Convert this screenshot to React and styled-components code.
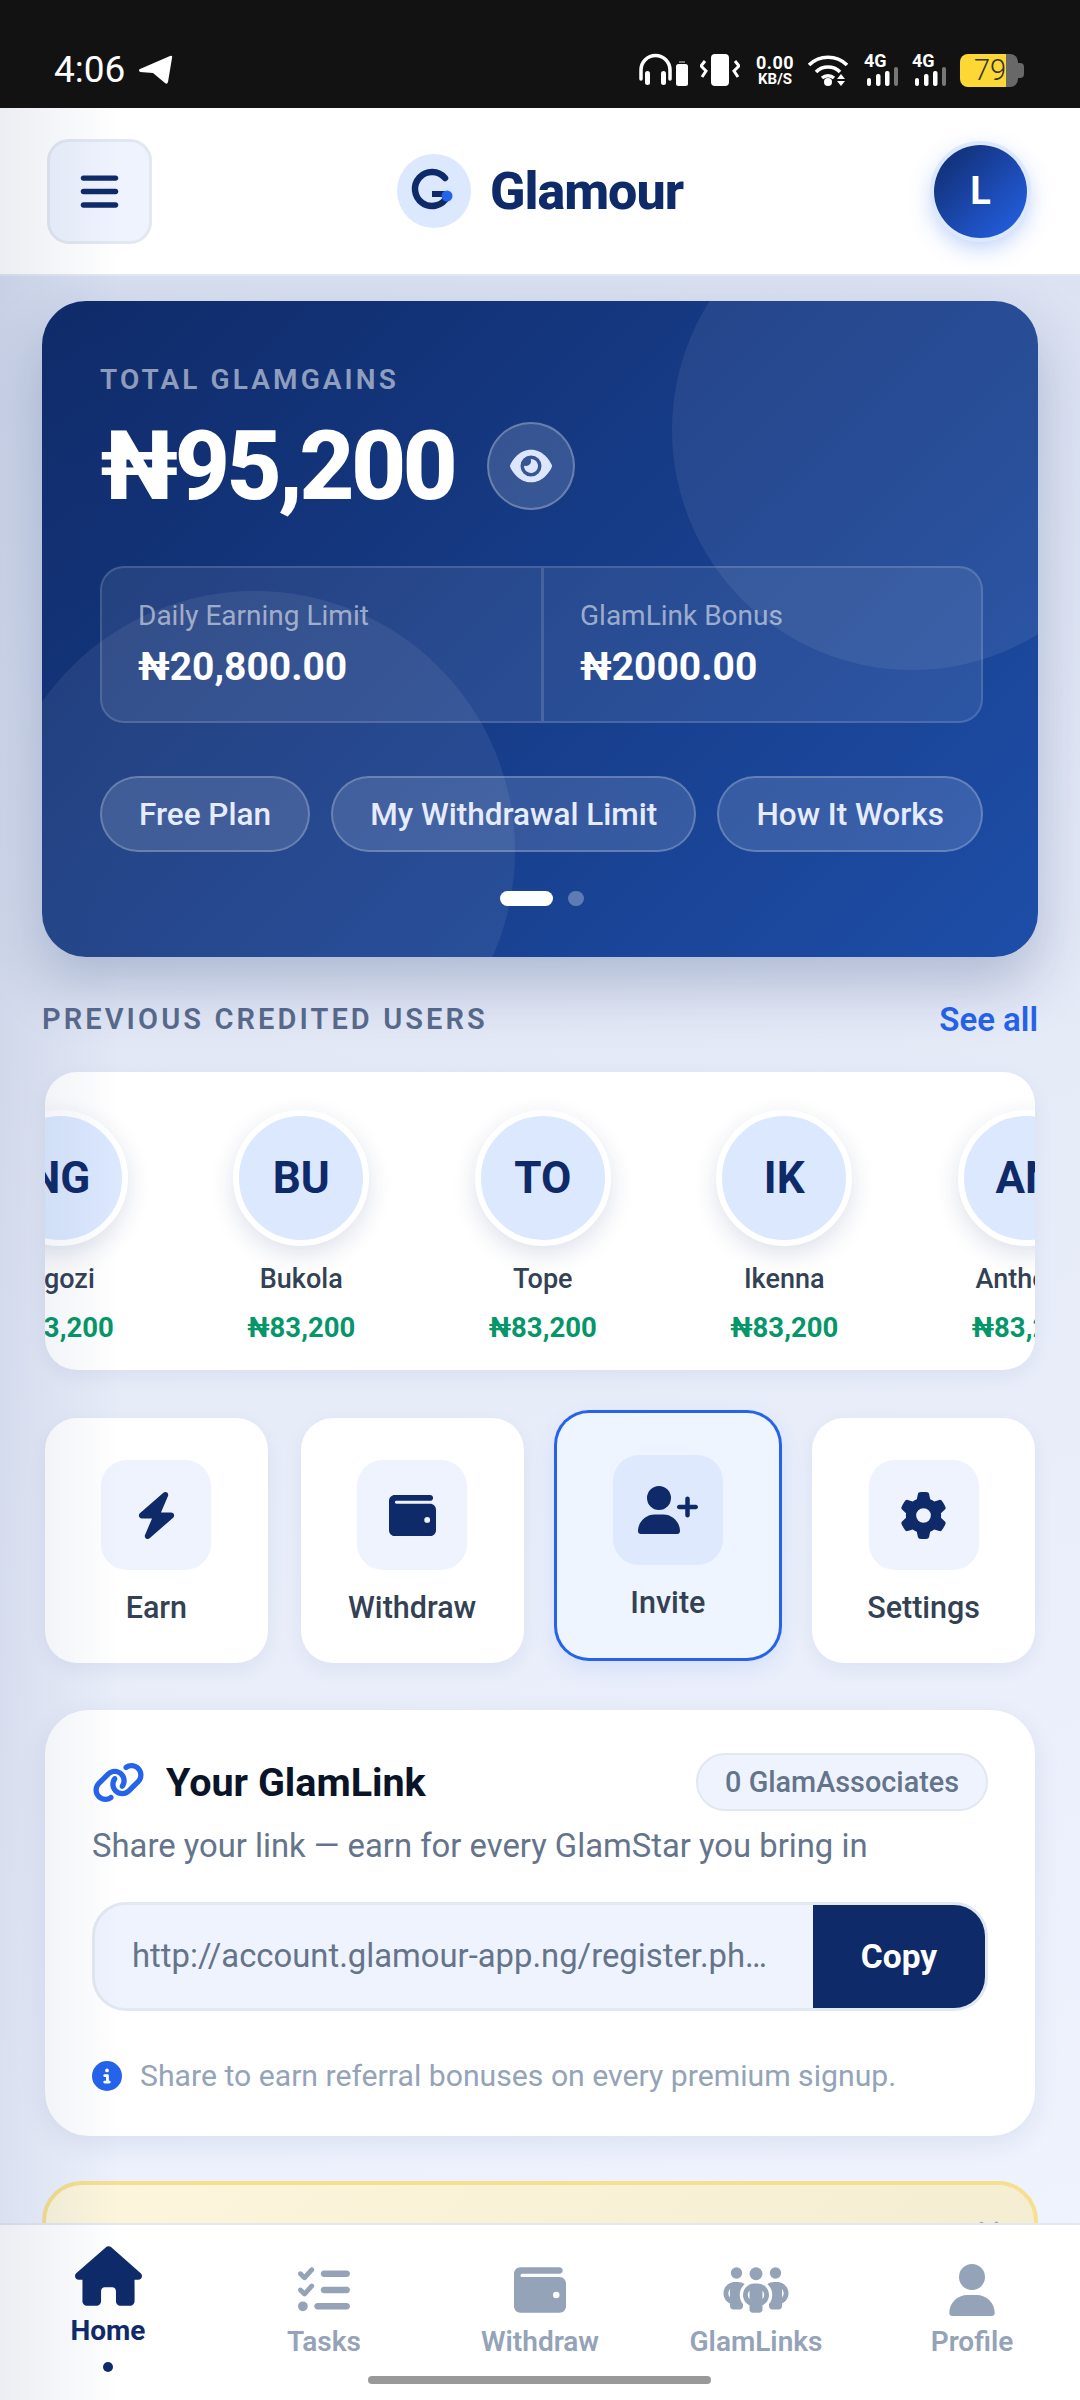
import React from 'react';
import styled, { createGlobalStyle } from 'styled-components';
import {
  FaBars,
  FaBolt,
  FaCircleInfo,
  FaEye,
  FaGear,
  FaHouse,
  FaLink,
  FaListCheck,
  FaPeopleGroup,
  FaUser,
  FaUserPlus,
  FaWallet,
  FaXmark
} from 'react-icons/fa6';

const Global = createGlobalStyle`
  html, body {
    margin: 0;
    padding: 0;
    background: #eff3fe;
  }
  * {
    box-sizing: border-box;
  }
  body {
    font-family: Roboto, "Liberation Sans", sans-serif;
  }
`;

const Phone = styled.div`
  position: relative;
  display: flex;
  flex-direction: column;
  width: 1080px;
  height: 2400px;
  overflow: hidden;

  &::after {
    content: '';
    position: absolute;
    left: 0;
    top: 108px;
    bottom: 0;
    width: 120px;
    background: linear-gradient(90deg, rgba(30, 58, 120, 0.09), rgba(30, 58, 120, 0));
    pointer-events: none;
  }
`;

/* status bar */
const StatusBar = styled.div`
  flex: none;
  display: flex;
  align-items: center;
  justify-content: space-between;
  height: 108px;
  padding: 32px 62px 0 54px;
  background: #121212;
  color: #fff;
`;

const Clock = styled.div`
  display: flex;
  align-items: center;
  gap: 13px;
  font-size: 37px;
  font-weight: 400;
  line-height: 40px;
`;

const StatusIcons = styled.div`
  display: flex;
  align-items: center;
`;

const NetSpeed = styled.div`
  display: flex;
  flex-direction: column;
  align-items: center;
  width: 40px;
  margin: 0 13px 0 15px;
  font-weight: 700;
  span:first-child {
    font-size: 18px;
    line-height: 17px;
    letter-spacing: 0.5px;
  }
  span:last-child {
    font-size: 15px;
    line-height: 16px;
  }
`;

const Signal = styled.div`
  position: relative;
  width: 34px;
  height: 32px;
  margin-left: ${p => p.$gap}px;

  span {
    position: absolute;
    left: 0;
    top: -2px;
    font-size: 18px;
    font-weight: 700;
    line-height: 18px;
  }
  svg {
    position: absolute;
    left: 3px;
    bottom: 0;
  }
`;

const Battery = styled.div`
  position: relative;
  width: 58px;
  height: 33px;
  margin-left: 14px;
  padding-left: 14px;
  border-radius: 8px;
  background: linear-gradient(90deg, #fdd835 46px, #686868 46px);
  color: #333;
  font-size: 29px;
  font-weight: 300;
  line-height: 33px;

  &::after {
    content: '';
    position: absolute;
    right: -6px;
    top: 9px;
    width: 6px;
    height: 15px;
    border-radius: 0 4px 4px 0;
    background: #686868;
  }
`;

/* header */
const Header = styled.header`
  flex: none;
  display: flex;
  align-items: center;
  justify-content: space-between;
  height: 168px;
  padding: 0 53px 0 47px;
  background: #fff;
  border-bottom: 2px solid #e2e8f0;
`;

const MenuButton = styled.button`
  display: flex;
  align-items: center;
  justify-content: center;
  width: 105px;
  height: 105px;
  padding: 0;
  border: 3px solid #e2e8f0;
  border-radius: 22px;
  background: #eff3fe;
  color: #0f2a68;
  font-size: 43px;
`;

const Brand = styled.div`
  display: flex;
  align-items: center;
  gap: 19px;
  margin-right: 6px;
  color: #0f2a68;
  font-size: 52px;
  font-weight: 800;
  letter-spacing: -1px;
`;

const UserBadge = styled.div`
  display: flex;
  align-items: center;
  justify-content: center;
  width: 93px;
  height: 93px;
  border-radius: 50%;
  background: linear-gradient(135deg, #0f2a68, #2563eb);
  box-shadow: 0 0 0 4px #dbe8fe, 0 8px 24px rgba(37, 99, 235, 0.35);
  color: #fff;
  font-size: 38px;
  font-weight: 700;
`;

/* main */
const Main = styled.main`
  flex: 1;
  min-height: 0;
  overflow: hidden;
  padding: 25px 42px 0;
  background: linear-gradient(165deg, #d8dff0 0%, #e6ebf8 48%, #eff3fe 100%);
`;

const Hero = styled.section`
  position: relative;
  height: 656px;
  padding: 61px 55px 0 58px;
  border-radius: 44px;
  overflow: hidden;
  background: linear-gradient(135deg, #0f2a68 0%, #1e4ea8 100%);
  box-shadow: 0 28px 60px rgba(15, 42, 104, 0.25);
  color: #fff;
`;

const Bubble = styled.div`
  position: absolute;
  left: ${p => p.$left}px;
  top: ${p => p.$top}px;
  width: ${p => p.$size}px;
  height: ${p => p.$size}px;
  border-radius: 50%;
  background: rgba(255, 255, 255, ${p => p.$alpha});
`;

const HeroBody = styled.div`
  position: relative;
`;

const HeroLabel = styled.div`
  color: rgba(255, 255, 255, 0.55);
  font-size: 28px;
  font-weight: 600;
  line-height: 36px;
  letter-spacing: 3.1px;
`;

const AmountRow = styled.div`
  display: flex;
  align-items: center;
  gap: 33px;
  height: 88px;
  margin-top: 24px;
`;

const Amount = styled.div`
  font-size: 96px;
  font-weight: 800;
  line-height: 88px;
  letter-spacing: -3.7px;
`;

const EyeButton = styled.div`
  display: flex;
  align-items: center;
  justify-content: center;
  width: 88px;
  height: 88px;
  border: 2px solid rgba(255, 255, 255, 0.25);
  border-radius: 50%;
  background: rgba(255, 255, 255, 0.15);
  color: #dce6ff;
  font-size: 42px;
`;

const Stats = styled.div`
  display: grid;
  grid-template-columns: 439px 1fr;
  height: 157px;
  margin-top: 56px;
  border: 2px solid rgba(255, 255, 255, 0.14);
  border-radius: 24px;
  background: rgba(255, 255, 255, 0.08);
`;

const Stat = styled.div`
  padding: 30px 36px 0;
  & + & {
    border-left: 3px solid rgba(255, 255, 255, 0.14);
    padding-left: 36px;
  }
`;

const StatLabel = styled.div`
  color: rgba(255, 255, 255, 0.55);
  font-size: 28px;
  line-height: 36px;
`;

const StatValue = styled.div`
  margin-top: 10px;
  font-size: 39px;
  font-weight: 700;
  line-height: 46px;
`;

const Pills = styled.div`
  display: flex;
  justify-content: space-between;
  margin-top: 53px;
`;

const Pill = styled.div`
  display: flex;
  align-items: center;
  height: 76px;
  padding: 0 37px;
  border: 2px solid rgba(255, 255, 255, 0.22);
  border-radius: 38px;
  background: rgba(255, 255, 255, 0.13);
  color: #e6ecff;
  font-size: 31.5px;
  font-weight: 500;
`;

const Dots = styled.div`
  display: flex;
  justify-content: center;
  gap: 15px;
  margin-top: 39px;
`;

const Dot = styled.div`
  width: ${p => (p.$active ? 53 : 16)}px;
  height: 15px;
  border-radius: 8px;
  background: ${p => (p.$active ? '#fff' : 'rgba(255, 255, 255, 0.3)')};
`;

const SectionHead = styled.div`
  display: flex;
  align-items: center;
  justify-content: space-between;
  height: 40px;
  margin-top: 42px;
`;

const SectionTitle = styled.div`
  color: #5a6b8c;
  font-size: 29px;
  font-weight: 600;
  letter-spacing: 3.1px;
`;

const SeeAll = styled.div`
  color: #2563eb;
  font-size: 33px;
  font-weight: 600;
`;

const UsersCard = styled.div`
  height: 298px;
  margin: 33px 3px 0;
  padding-top: 38px;
  border-radius: 32px;
  background: #fff;
  overflow: hidden;
  box-shadow: 0 6px 20px rgba(15, 42, 104, 0.06);
`;

const UsersTrack = styled.div`
  display: flex;
  margin-left: -106px;
`;

const UserItem = styled.div`
  flex: none;
  display: flex;
  flex-direction: column;
  align-items: center;
  width: 241.5px;
`;

const Initials = styled.div`
  display: flex;
  align-items: center;
  justify-content: center;
  width: 136px;
  height: 136px;
  border: 6px solid #fff;
  border-radius: 50%;
  background: #dbe8fe;
  box-shadow: 0 8px 24px rgba(15, 42, 104, 0.14);
  color: #0f2a68;
  font-size: 44px;
  font-weight: 700;
`;

const UserName = styled.div`
  margin-top: 15px;
  color: #334155;
  font-size: 27px;
  font-weight: 500;
  line-height: 36px;
`;

const UserGain = styled.div`
  margin-top: 13px;
  color: #059669;
  font-size: 27.5px;
  font-weight: 700;
  line-height: 36px;
`;

const Tiles = styled.div`
  display: grid;
  grid-template-columns: repeat(4, 1fr);
  gap: 33px;
  margin: 48px 3px 0;
`;

const Tile = styled.div`
  display: flex;
  flex-direction: column;
  align-items: center;
  height: 245px;
  padding-top: 42px;
  border-radius: 32px;
  background: ${p => (p.$active ? '#eff5ff' : '#fff')};
  box-shadow: ${p =>
    p.$active
      ? '0 0 0 3px #2563eb, 0 8px 24px rgba(37, 99, 235, 0.12)'
      : '0 6px 20px rgba(15, 42, 104, 0.06)'};
  transform: ${p => (p.$active ? 'translateY(-5px)' : 'none')};
`;

const TileIcon = styled.div`
  display: flex;
  align-items: center;
  justify-content: center;
  width: 110px;
  height: 110px;
  border-radius: 26px;
  background: ${p => (p.$active ? '#dfe9fd' : '#eff3fe')};
  color: #0f2a68;

  svg {
    flex: none;
    width: ${p => p.$w}px;
    height: ${p => p.$h}px;
  }
`;

const TileLabel = styled.div`
  margin-top: 18px;
  color: #334155;
  font-size: 30.5px;
  font-weight: 500;
  line-height: 40px;
`;

const LinkCard = styled.section`
  height: 426px;
  margin: 47px 3px 0;
  padding: 43px 47px 0;
  border-radius: 44px;
  background: #fff;
  box-shadow: 0 8px 28px rgba(15, 42, 104, 0.08);
`;

const LinkTop = styled.div`
  display: flex;
  align-items: center;
  justify-content: space-between;
  height: 58px;
`;

const LinkTitle = styled.div`
  display: flex;
  align-items: center;
  gap: 21px;
  color: #0a1428;
  font-size: 39.5px;
  font-weight: 700;

  svg {
    flex: none;
    color: #2563eb;
    width: 53px;
    height: 53px;
  }
`;

const AssocBadge = styled.div`
  display: flex;
  align-items: center;
  height: 58px;
  padding: 0 27px;
  border: 2px solid #e2e8f0;
  border-radius: 29px;
  background: #eff3fe;
  color: #64748b;
  font-size: 28.8px;
  font-weight: 500;
`;

const LinkSub = styled.div`
  margin-top: 15px;
  color: #64748b;
  font-size: 32.8px;
  line-height: 40px;
`;

const LinkBox = styled.div`
  display: flex;
  height: 109px;
  margin-top: 36px;
  border: 3px solid #e2e8f0;
  border-radius: 34px;
  background: #eff3fe;
  overflow: hidden;
`;

const LinkText = styled.div`
  flex: 1;
  min-width: 0;
  padding: 0 40px 0 37px;
  color: #64748b;
  font-size: 32.8px;
  line-height: 103px;
  white-space: nowrap;
  overflow: hidden;
  text-overflow: ellipsis;
`;

const CopyButton = styled.div`
  flex: none;
  display: flex;
  align-items: center;
  justify-content: center;
  width: 172px;
  background: #0f2a68;
  color: #fff;
  font-size: 33.5px;
  font-weight: 700;
`;

const InfoRow = styled.div`
  display: flex;
  align-items: center;
  gap: 18px;
  margin-top: 47px;
  color: #94a3b8;
  font-size: 30.2px;
  line-height: 36px;

  svg {
    color: #2563eb;
    font-size: 30px;
  }
`;

const Notice = styled.section`
  position: relative;
  height: 220px;
  margin-top: 45px;
  border: 4px solid #f6e08e;
  border-radius: 40px;
  background: linear-gradient(135deg, #fdf6dc, #f3ecd0);
`;

const NoticeClose = styled.div`
  position: absolute;
  right: 30px;
  top: 31px;
  color: #94a3b8;
  font-size: 30px;
  line-height: 30px;
`;

/* bottom nav */
const Nav = styled.nav`
  position: relative;
  flex: none;
  display: grid;
  grid-template-columns: repeat(5, 1fr);
  height: 177px;
  background: #fff;
  border-top: 2px solid #e2e8f0;
`;

const NavItem = styled.div`
  display: flex;
  flex-direction: column;
  align-items: center;
  padding-top: ${p => (p.$active ? 21 : 39)}px;
  color: ${p => (p.$active ? '#0f2a68' : '#94a3b8')};
  font-size: 28px;
  font-weight: ${p => (p.$active ? 700 : 600)};

  svg {
    flex: none;
    display: block;
    width: ${p => p.$w}px;
    height: ${p => p.$h}px;
  }
`;

const NavLabel = styled.div`
  margin-top: ${p => (p.$active ? 7 : 8)}px;
  line-height: 36px;
`;

const NavDot = styled.div`
  width: 10px;
  height: 10px;
  margin-top: 13px;
  border-radius: 50%;
  background: #0f2a68;
`;

const HomeBar = styled.div`
  position: absolute;
  left: 368px;
  top: 151px;
  width: 343px;
  height: 8px;
  border-radius: 4px;
  background: #999;
`;

const ArrowIcon = () => (
  <svg width="35" height="30" viewBox="0 0 35 30" fill="#fff">
    <path d="M32 1Q35 0 34 3L30 27Q29 30 27 28L15 18L2 17Q0 15 2 14Z" />
  </svg>
);

const HeadphonesIcon = () => (
  <svg width="50" height="34" viewBox="0 0 50 34" fill="#fff">
    <path d="M3 26V17A14.5 14.5 0 0 1 32 17V26" fill="none" stroke="#fff" strokeWidth="3.5" strokeLinecap="round" />
    <rect x="7" y="18" width="5" height="14" rx="2.5" />
    <rect x="23" y="18" width="5" height="14" rx="2.5" />
    <rect x="38" y="11" width="12" height="22" rx="2.5" />
    <rect x="41" y="8" width="6" height="2" fill="#777" />
  </svg>
);

const VibrateIcon = () => (
  <svg width="40" height="32" viewBox="0 0 40 32" fill="#fff" style={{ marginLeft: 12 }}>
    <rect x="11" y="0" width="18" height="32" rx="4" />
    <path d="M5 7L1 12L6 17L2 23M35 7L39 12L34 17L38 23" fill="none" stroke="#fff" strokeWidth="3" />
  </svg>
);

const WifiIcon = () => (
  <svg width="40" height="33" viewBox="0 0 40 33" fill="#fff">
    <path d="M1 11A27 27 0 0 1 39 11" fill="none" stroke="#fff" strokeWidth="3.6" />
    <path d="M8 18A17 17 0 0 1 32 18" fill="none" stroke="#fff" strokeWidth="3.6" />
    <path d="M14 24A9 9 0 0 1 26 24" fill="none" stroke="#fff" strokeWidth="3.4" />
    <circle cx="20" cy="28" r="4" />
    <path d="M33 20L37 25H29ZM29 27H37L33 32Z" />
  </svg>
);

const BarsIcon = () => (
  <svg width="31" height="19" viewBox="0 0 31 19" fill="#fff">
    <rect x="0" y="11" width="4" height="8" rx="2" />
    <rect x="9" y="7" width="4.5" height="12" rx="2" />
    <rect x="18" y="4" width="4.5" height="15" rx="2" />
    <rect x="27" y="0" width="4" height="19" rx="2" fill="#777" />
  </svg>
);

const LogoMark = () => (
  <svg width="74" height="74" viewBox="0 0 74 74">
    <circle cx="37" cy="37" r="37" fill="#dbe8fe" />
    <path d="M48 24A17 17 0 1 0 50 43" fill="none" stroke="#0f2a68" strokeWidth="6.5" strokeLinecap="round" />
    <path d="M35 40H50" stroke="#0f2a68" strokeWidth="6" />
    <circle cx="50" cy="42" r="5.5" fill="#2563eb" />
  </svg>
);

const USERS = [
  { initials: 'NG', name: 'Ngozi' },
  { initials: 'BU', name: 'Bukola' },
  { initials: 'TO', name: 'Tope' },
  { initials: 'IK', name: 'Ikenna' },
  { initials: 'AN', name: 'Anthony' }
];

const TILES = [
  { label: 'Earn', icon: <FaBolt />, w: 47, h: 47 },
  { label: 'Withdraw', icon: <FaWallet />, w: 47, h: 47 },
  { label: 'Invite', icon: <FaUserPlus />, w: 60, h: 48, active: true },
  { label: 'Settings', icon: <FaGear />, w: 47, h: 47 }
];

const NAV = [
  { label: 'Home', icon: <FaHouse />, w: 67, h: 60, active: true },
  { label: 'Tasks', icon: <FaListCheck />, w: 52, h: 52 },
  { label: 'Withdraw', icon: <FaWallet />, w: 52, h: 52 },
  { label: 'GlamLinks', icon: <FaPeopleGroup />, w: 66, h: 52 },
  { label: 'Profile', icon: <FaUser />, w: 52, h: 52 }
];

const App = () => (
  <Phone>
    <Global />
    <StatusBar>
      <Clock>
        4:06
        <ArrowIcon />
      </Clock>
      <StatusIcons>
        <HeadphonesIcon />
        <VibrateIcon />
        <NetSpeed>
          <span>0.00</span>
          <span>KB/S</span>
        </NetSpeed>
        <WifiIcon />
        <Signal $gap={16}>
          <span>4G</span>
          <BarsIcon />
        </Signal>
        <Signal $gap={14}>
          <span>4G</span>
          <BarsIcon />
        </Signal>
        <Battery>79</Battery>
      </StatusIcons>
    </StatusBar>

    <Header>
      <MenuButton>
        <FaBars />
      </MenuButton>
      <Brand>
        <LogoMark />
        Glamour
      </Brand>
      <UserBadge>L</UserBadge>
    </Header>

    <Main>
      <Hero>
        <Bubble $left={630} $top={-111} $size={480} $alpha={0.07} />
        <Bubble $left={-47} $top={290} $size={520} $alpha={0.07} />
        <HeroBody>
          <HeroLabel>TOTAL GLAMGAINS</HeroLabel>
          <AmountRow>
            <Amount>₦95,200</Amount>
            <EyeButton>
              <FaEye />
            </EyeButton>
          </AmountRow>
          <Stats>
            <Stat>
              <StatLabel>Daily Earning Limit</StatLabel>
              <StatValue>₦20,800.00</StatValue>
            </Stat>
            <Stat>
              <StatLabel>GlamLink Bonus</StatLabel>
              <StatValue>₦2000.00</StatValue>
            </Stat>
          </Stats>
          <Pills>
            <Pill>Free Plan</Pill>
            <Pill>My Withdrawal Limit</Pill>
            <Pill>How It Works</Pill>
          </Pills>
          <Dots>
            <Dot $active />
            <Dot />
          </Dots>
        </HeroBody>
      </Hero>

      <SectionHead>
        <SectionTitle>PREVIOUS CREDITED USERS</SectionTitle>
        <SeeAll>See all</SeeAll>
      </SectionHead>

      <UsersCard>
        <UsersTrack>
          {USERS.map(user =>
            <UserItem key={user.initials}>
              <Initials>{user.initials}</Initials>
              <UserName>{user.name}</UserName>
              <UserGain>₦83,200</UserGain>
            </UserItem>
          )}
        </UsersTrack>
      </UsersCard>

      <Tiles>
        {TILES.map(tile =>
          <Tile key={tile.label} $active={tile.active}>
            <TileIcon $active={tile.active} $w={tile.w} $h={tile.h}>{tile.icon}</TileIcon>
            <TileLabel>{tile.label}</TileLabel>
          </Tile>
        )}
      </Tiles>

      <LinkCard>
        <LinkTop>
          <LinkTitle>
            <FaLink />
            Your GlamLink
          </LinkTitle>
          <AssocBadge>0 GlamAssociates</AssocBadge>
        </LinkTop>
        <LinkSub>Share your link — earn for every GlamStar you bring in</LinkSub>
        <LinkBox>
          <LinkText>http://account.glamour-app.ng/register.php?ref=lucky2024</LinkText>
          <CopyButton>Copy</CopyButton>
        </LinkBox>
        <InfoRow>
          <FaCircleInfo />
          Share to earn referral bonuses on every premium signup.
        </InfoRow>
      </LinkCard>

      <Notice>
        <NoticeClose>
          <FaXmark />
        </NoticeClose>
      </Notice>
    </Main>

    <Nav>
      {NAV.map(item =>
        <NavItem key={item.label} $active={item.active} $w={item.w} $h={item.h}>
          {item.icon}
          <NavLabel $active={item.active}>{item.label}</NavLabel>
          {item.active && <NavDot />}
        </NavItem>
      )}
      <HomeBar />
    </Nav>
  </Phone>
);

export default App;
